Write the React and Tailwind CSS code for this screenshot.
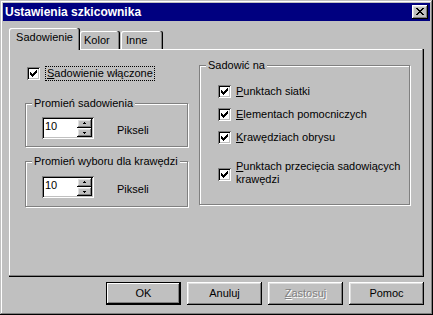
import React from 'react';

// Win95-ish 3D borders
const RAISED = 'shadow-[inset_-1px_-1px_#000,inset_1px_1px_#fff,inset_-2px_-2px_#808080,inset_2px_2px_#dfdfdf]';
const SUNKEN = 'shadow-[inset_1px_1px_#808080,inset_-1px_-1px_#fff,inset_2px_2px_#000,inset_-2px_-2px_#c0c0c0]';
const ETCHED = 'border border-[#808080] shadow-[inset_1px_1px_#fff,1px_1px_#fff]';

function CheckMark() {
  // classic 7x7 pixel check
  const cols = [2, 3, 4, 3, 2, 1, 0];
  return (
    <svg width="7" height="7" viewBox="0 0 7 7" shapeRendering="crispEdges">
      {cols.map((y, x) => (
        <rect key={x} x={x} y={y} width="1" height="3" fill="#000" />
      ))}
    </svg>
  );
}

function Checkbox() {
  return (
    <span className={`w-[13px] h-[13px] shrink-0 bg-white flex items-center justify-center ${SUNKEN}`}>
      <CheckMark />
    </span>
  );
}

function Arrow({ up }) {
  return (
    <svg width="5" height="3" viewBox="0 0 5 3" shapeRendering="crispEdges">
      {up ? (
        <>
          <rect x="2" y="0" width="1" height="1" fill="#000" />
          <rect x="1" y="1" width="3" height="1" fill="#000" />
        </>
      ) : (
        <>
          <rect x="1" y="1" width="3" height="1" fill="#000" />
          <rect x="2" y="2" width="1" height="1" fill="#000" />
        </>
      )}
    </svg>
  );
}

function Spin({ value }) {
  return (
    <div className={`w-[52px] h-[22px] p-[2px] flex bg-white ${SUNKEN}`}>
      <div className="flex-1 pl-[1px] pt-[1px]">{value}</div>
      <div className="w-[15px] flex flex-col">
        <div className={`h-[9px] bg-[#c0c0c0] flex items-center justify-center ${RAISED}`}>
          <Arrow up />
        </div>
        <div className={`h-[9px] bg-[#c0c0c0] flex items-center justify-center ${RAISED}`}>
          <Arrow />
        </div>
      </div>
    </div>
  );
}

function Group({ label, className, children }) {
  return (
    <div className={`relative ${ETCHED} ${className}`}>
      <span className="absolute left-[6px] top-[-7px] px-[2px] bg-[#c0c0c0]">{label}</span>
      {children}
    </div>
  );
}

function CheckRow({ u, rest, className = '' }) {
  return (
    <div className={`flex items-center gap-[5px] ${className}`}>
      <Checkbox />
      <span>
        <span className="underline">{u}</span>
        {rest}
      </span>
    </div>
  );
}

function Button({ children, isDefault }) {
  const edge = isDefault
    ? 'shadow-[inset_0_0_0_1px_#000,inset_-2px_-2px_#000,inset_2px_2px_#fff,inset_-3px_-3px_#808080]'
    : RAISED;
  return (
    <div className={`w-[75px] h-[23px] bg-[#c0c0c0] flex items-center justify-center ${edge}`}>
      {children}
    </div>
  );
}

export default function App() {
  return (
    <div className="w-[433px] h-[315px] bg-[#c0c0c0] p-[3px] flex flex-col font-['Liberation_Sans',Arial,sans-serif] text-[11px] leading-[13px] text-black shadow-[inset_-1px_-1px_#000,inset_1px_1px_#c0c0c0,inset_-2px_-2px_#808080,inset_2px_2px_#fff]">
      {/* Title bar */}
      <div className="h-[18px] shrink-0 bg-[#000080] flex items-center justify-between pl-[2px] pr-[2px]">
        <span className="text-white font-bold text-[12px] leading-[14px]">Ustawienia szkicownika</span>
        <div className={`w-[16px] h-[14px] bg-[#c0c0c0] flex items-center justify-center pb-px pr-px ${RAISED}`}>
          <svg width="8" height="7" viewBox="0 0 8 7" shapeRendering="crispEdges">
            <path d="M0 0h2v1h1v1h2V1h1V0h2v1H7v1H6v1H5v1h1v1h1v1h1v1H6V6H5V5H3v1H2v1H0V6h1V5h1V4h1V3H2V2H1V1H0z" fill="#000" />
          </svg>
        </div>
      </div>

      <div className="flex flex-col px-[6px] pt-[7px]">
        {/* Tabs */}
        <div className="relative z-10 flex items-end h-[22px] -mb-px">
          <div className="h-[22px] w-[71px] bg-[#c0c0c0] rounded-t-[2px] pt-[3px] text-center shadow-[inset_-1px_0_#000,inset_-2px_0_#808080,inset_1px_1px_#fff]">
            Sadowienie
          </div>
          <div className="h-[18px] w-[40px] mb-px bg-[#c0c0c0] rounded-t-[2px] pt-[3px] pl-[4px] shadow-[inset_-1px_0_#000,inset_-2px_0_#808080,inset_1px_1px_#fff]">
            Kolor
          </div>
          <div className="h-[18px] w-[42px] ml-px mb-px bg-[#c0c0c0] rounded-t-[2px] pt-[3px] pl-[5px] shadow-[inset_-1px_0_#000,inset_-2px_0_#808080,inset_1px_1px_#fff]">
            Inne
          </div>
        </div>

        {/* Panel */}
        <div className="h-[228px] bg-[#c0c0c0] pl-[16px] pt-[16px] flex gap-[10px] shadow-[inset_-1px_-1px_#000,inset_-2px_-2px_#808080,inset_1px_1px_#fff]">
          <div className="w-[164px] flex flex-col">
            <div className="flex items-center mt-[1px] ml-[2px] h-[15px]">
              <Checkbox />
              <span className="ml-[5px] px-[1px] border border-dotted border-black">
                <span className="underline">S</span>adowienie włączone
              </span>
            </div>

            <Group label="Promień sadowienia" className="w-[163px] h-[44px] mt-[22px] pl-[16px] pt-[13px]">
              <div className="flex items-start">
                <Spin value="10" />
                <span className="ml-[23px] mt-[7px]">Pikseli</span>
              </div>
            </Group>

            <Group label="Promień wyboru dla krawędzi" className="w-[163px] h-[46px] mt-[14px] pl-[16px] pt-[14px]">
              <div className="flex items-start">
                <Spin value="10" />
                <span className="ml-[23px] mt-[7px]">Pikseli</span>
              </div>
            </Group>
          </div>

          <Group label="Sadowić na" className="w-[211px] h-[140px] pl-[18px] pt-[19px] flex flex-col">
            <CheckRow u="P" rest="unktach siatki" />
            <CheckRow u="E" rest="lementach pomocniczych" className="mt-[10px]" />
            <CheckRow u="K" rest="rawędziach obrysu" className="mt-[10px]" />
            <div className="flex items-start gap-[5px] mt-[16px]">
              <span className="mt-[8px]">
                <Checkbox />
              </span>
              <span>
                <span className="underline">P</span>unktach przecięcia sadowiących
                <br />
                krawędzi
              </span>
            </div>
          </Group>
        </div>

        {/* Buttons */}
        <div className="flex justify-end gap-[6px] mt-[5px]">
          <Button isDefault>OK</Button>
          <Button>Anuluj</Button>
          <Button>
            <span className="text-[#808080] [text-shadow:1px_1px_0_#fff]">
              <span className="underline">Z</span>astosuj
            </span>
          </Button>
          <Button>Pomoc</Button>
        </div>
      </div>
    </div>
  );
}
